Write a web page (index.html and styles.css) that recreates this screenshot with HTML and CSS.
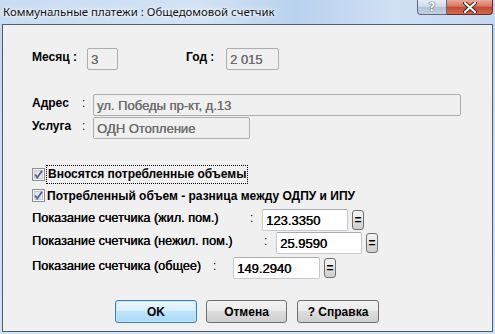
FILE: index.html
```html
<!DOCTYPE html>
<html lang="ru">
<head>
  <meta charset="UTF-8">
  <title>Коммунальные платежи : Общедомовой счетчик</title>
  <link rel="stylesheet" href="styles.css">
</head>
<body>
  <div class="window">
    <div class="titlebar">
      <span class="title">Коммунальные платежи : Общедомовой счетчик</span>
      <div class="caption-btns">
        <span class="cap help">?</span>
        <span class="cap close">
          <svg width="14" height="11" viewBox="0 0 14 11">
            <path d="M2 1 L12 10 M12 1 L2 10" stroke="#3b2a2a" stroke-width="4" stroke-linecap="round"/>
            <path d="M2 1 L12 10 M12 1 L2 10" stroke="#fff" stroke-width="2" stroke-linecap="round"/>
          </svg>
        </span>
      </div>
    </div>

    <div class="client">
      <div class="row period">
        <span class="lbl b month">Месяц :</span>
        <span class="field ro w-month">3</span>
        <span class="lbl b year">Год :</span>
        <span class="field ro w-year">2 015</span>
      </div>

      <div class="row addr">
        <span class="lbl b name">Адрес</span><span class="colon">:</span>
        <span class="field ro w-addr">ул. Победы пр-кт, д.13</span>
      </div>
      <div class="row service">
        <span class="lbl b name">Услуга</span><span class="colon">:</span>
        <span class="field ro w-service">ОДН Отопление</span>
      </div>

      <div class="row check first">
        <span class="box">
          <svg width="13" height="13" viewBox="0 0 13 13">
            <rect x="0.5" y="0.5" width="12" height="12" fill="#f4f4f4" stroke="#8e8f8f"/>
            <rect x="2.5" y="2.5" width="8" height="8" fill="#e6e6e6" stroke="#c9c9c9"/>
            <path d="M3 6.5 L5.3 9.5 L10 2.8" fill="none" stroke="#4d61a0" stroke-width="1.8"/>
          </svg>
        </span>
        <span class="b focus">Вносятся потребленные объемы</span>
      </div>
      <div class="row check second">
        <span class="box">
          <svg width="13" height="13" viewBox="0 0 13 13">
            <rect x="0.5" y="0.5" width="12" height="12" fill="#f4f4f4" stroke="#8e8f8f"/>
            <rect x="2.5" y="2.5" width="8" height="8" fill="#e6e6e6" stroke="#c9c9c9"/>
            <path d="M3 6.5 L5.3 9.5 L10 2.8" fill="none" stroke="#4d61a0" stroke-width="1.8"/>
          </svg>
        </span>
        <span class="b">Потребленный объем - разница между ОДПУ и ИПУ</span>
      </div>

      <div class="row meter m1">
        <span class="lbl mlabel">Показание счетчика (жил. пом.)</span><span class="colon mcolon">:</span>
        <span class="field num">123.3350</span>
        <span class="eq">=</span>
      </div>
      <div class="row meter m2">
        <span class="lbl mlabel">Показание счетчика (нежил. пом.)</span><span class="colon mcolon">:</span>
        <span class="field num">25.9590</span>
        <span class="eq">=</span>
      </div>
      <div class="row meter m3">
        <span class="lbl mlabel">Показание счетчика (общее)</span><span class="colon mcolon">:</span>
        <span class="field num">149.2940</span>
        <span class="eq">=</span>
      </div>

      <div class="row actions">
        <span class="btn default">OK</span>
        <span class="btn cancel">Отмена</span>
        <span class="btn help-btn">? Справка</span>
      </div>
    </div>
  </div>
</body>
</html>
```

FILE: styles.css
```css
body {
  margin: 0;
  background: #c6dbf2;
}
.window {
  width: 495px;
  height: 334px;
  overflow: hidden;
  background: linear-gradient(to bottom, #bdd6f1 0%, #c9ddf3 40%, #cfe2f6 100%);
  font-family: "Liberation Sans", Arial, sans-serif;
  font-size: 12px;
  color: #000;
}
.titlebar {
  height: 24px;
  display: flex;
  justify-content: space-between;
  background: linear-gradient(to right, #c8dcf2 0%, #d3e3f5 40%, #b9d2ee 60%, #cfe0f4 80%, #c4d9f1 100%);
}
.title {
  font-family: "Noto Sans", sans-serif;
  font-size: 11.4px;
  padding: 4px 0 0 3px;
  color: #111;
  text-shadow: 0 0 6px #fff, 0 0 3px #fff;
}
.caption-btns {
  display: flex;
  margin-right: 2px;
  height: 15px;
}
.cap {
  display: flex;
  align-items: center;
  justify-content: center;
  height: 14px;
  border: 1px solid #5d6b80;
  border-top: none;
}
.help {
  width: 28px;
  border-radius: 0 0 0 4px;
  background: linear-gradient(to bottom, #e6eef7 0%, #cdd9e8 50%, #b4c4d8 51%, #c2d0e2 100%);
  color: #fff;
  font-family: "DejaVu Sans", sans-serif;
  font-weight: bold;
  font-size: 12px;
  text-shadow: 0 0 1px #333, 0 0 1px #333;
}
.close {
  width: 45px;
  border-left: none;
  border-color: #6e2a20;
  border-radius: 0 0 4px 0;
  background: linear-gradient(to bottom, #e9a897 0%, #d7765f 45%, #c44a30 52%, #d2694c 100%);
}
.client {
  margin: 0 2px;
  height: 306px;
  border: 1px solid #4f5d6e;
  background: #f0f0f0;
  padding-left: 29px;
}
.row {
  display: flex;
  align-items: center;
}
.b {
  font-weight: bold;
}
.lbl {
  margin-bottom: 4px;
  white-space: nowrap;
}
.field {
  box-sizing: border-box;
  height: 22px;
  display: flex;
  align-items: center;
  padding-left: 3px;
  white-space: nowrap;
  overflow: hidden;
}
.ro {
  background: #f0f0f0;
  border: 1px solid #adadad;
  border-radius: 2px;
  color: #6d6d6d;
  font-size: 13px;
  text-shadow: 0.3px 0 0 #6d6d6d;
}
.period {
  margin-top: 23px;
}
.month {
  width: 55px;
}
.w-month {
  width: 31px;
}
.year {
  width: 40px;
  margin-left: 68px;
}
.w-year {
  width: 53px;
}
.addr {
  margin-top: 24px;
}
.service {
  margin-top: 1px;
}
.name {
  width: 50px;
}
.colon {
  width: 11px;
  margin-bottom: 4px;
}
.w-addr {
  width: 368px;
}
.w-service {
  width: 157px;
}
.check {
  height: 17px;
}
.check.first {
  margin-top: 27px;
}
.check.second {
  margin-top: 4px;
}
.box {
  width: 13px;
  height: 13px;
  margin-right: 2px;
  display: flex;
}
.focus {
  outline: 1px dotted #000;
  padding: 1px 1px 2px 1px;
}
.meter {
  height: 22px;
}
.m1 {
  margin-top: 5px;
}
.m2 {
  margin-top: 1px;
}
.m3 {
  margin-top: 3px;
}
.mlabel {
  font-size: 12.7px;
  text-shadow: 0.3px 0 0 #000;
}
.m1 .mlabel { width: 218px; }
.m2 .mlabel { width: 232px; }
.m3 .mlabel { width: 181px; }
.mcolon { width: 12px; }
.m3 .mcolon { width: 20px; }
.num {
  width: 86px;
  background: #fff;
  border: 1px solid #c5c8cf;
  border-top-color: #abadb3;
  border-radius: 2px;
  font-size: 13px;
  text-shadow: 0.4px 0 0 #000;
}
.m3 .num {
  width: 87px;
}
.eq {
  box-sizing: border-box;
  width: 12px;
  height: 20px;
  margin-left: 4px;
  display: flex;
  align-items: center;
  justify-content: center;
  border: 1px solid #707070;
  border-radius: 3px;
  background: linear-gradient(to bottom, #f2f2f2 0%, #ebebeb 45%, #dddddd 50%, #cfcfcf 100%);
  font-weight: bold;
  font-size: 12px;
}
.actions {
  margin-top: 21px;
  padding-left: 83px;
  gap: 9px;
}
.btn {
  box-sizing: border-box;
  width: 82px;
  height: 23px;
  display: flex;
  align-items: center;
  justify-content: center;
  border: 1px solid #707070;
  border-radius: 3px;
  background: linear-gradient(to bottom, #f2f2f2 0%, #ebebeb 45%, #dddddd 50%, #cfcfcf 100%);
  font-weight: bold;
}
.btn.default {
  border-color: #3c7fb1;
  background: linear-gradient(to bottom, #eaf6fd 0%, #d9f0fc 45%, #bee6fd 50%, #a7d9f5 100%);
  box-shadow: inset 0 0 0 1px #c4e5f6;
}
.btn.cancel {
  width: 81px;
  margin-right: 1px;
}
```
